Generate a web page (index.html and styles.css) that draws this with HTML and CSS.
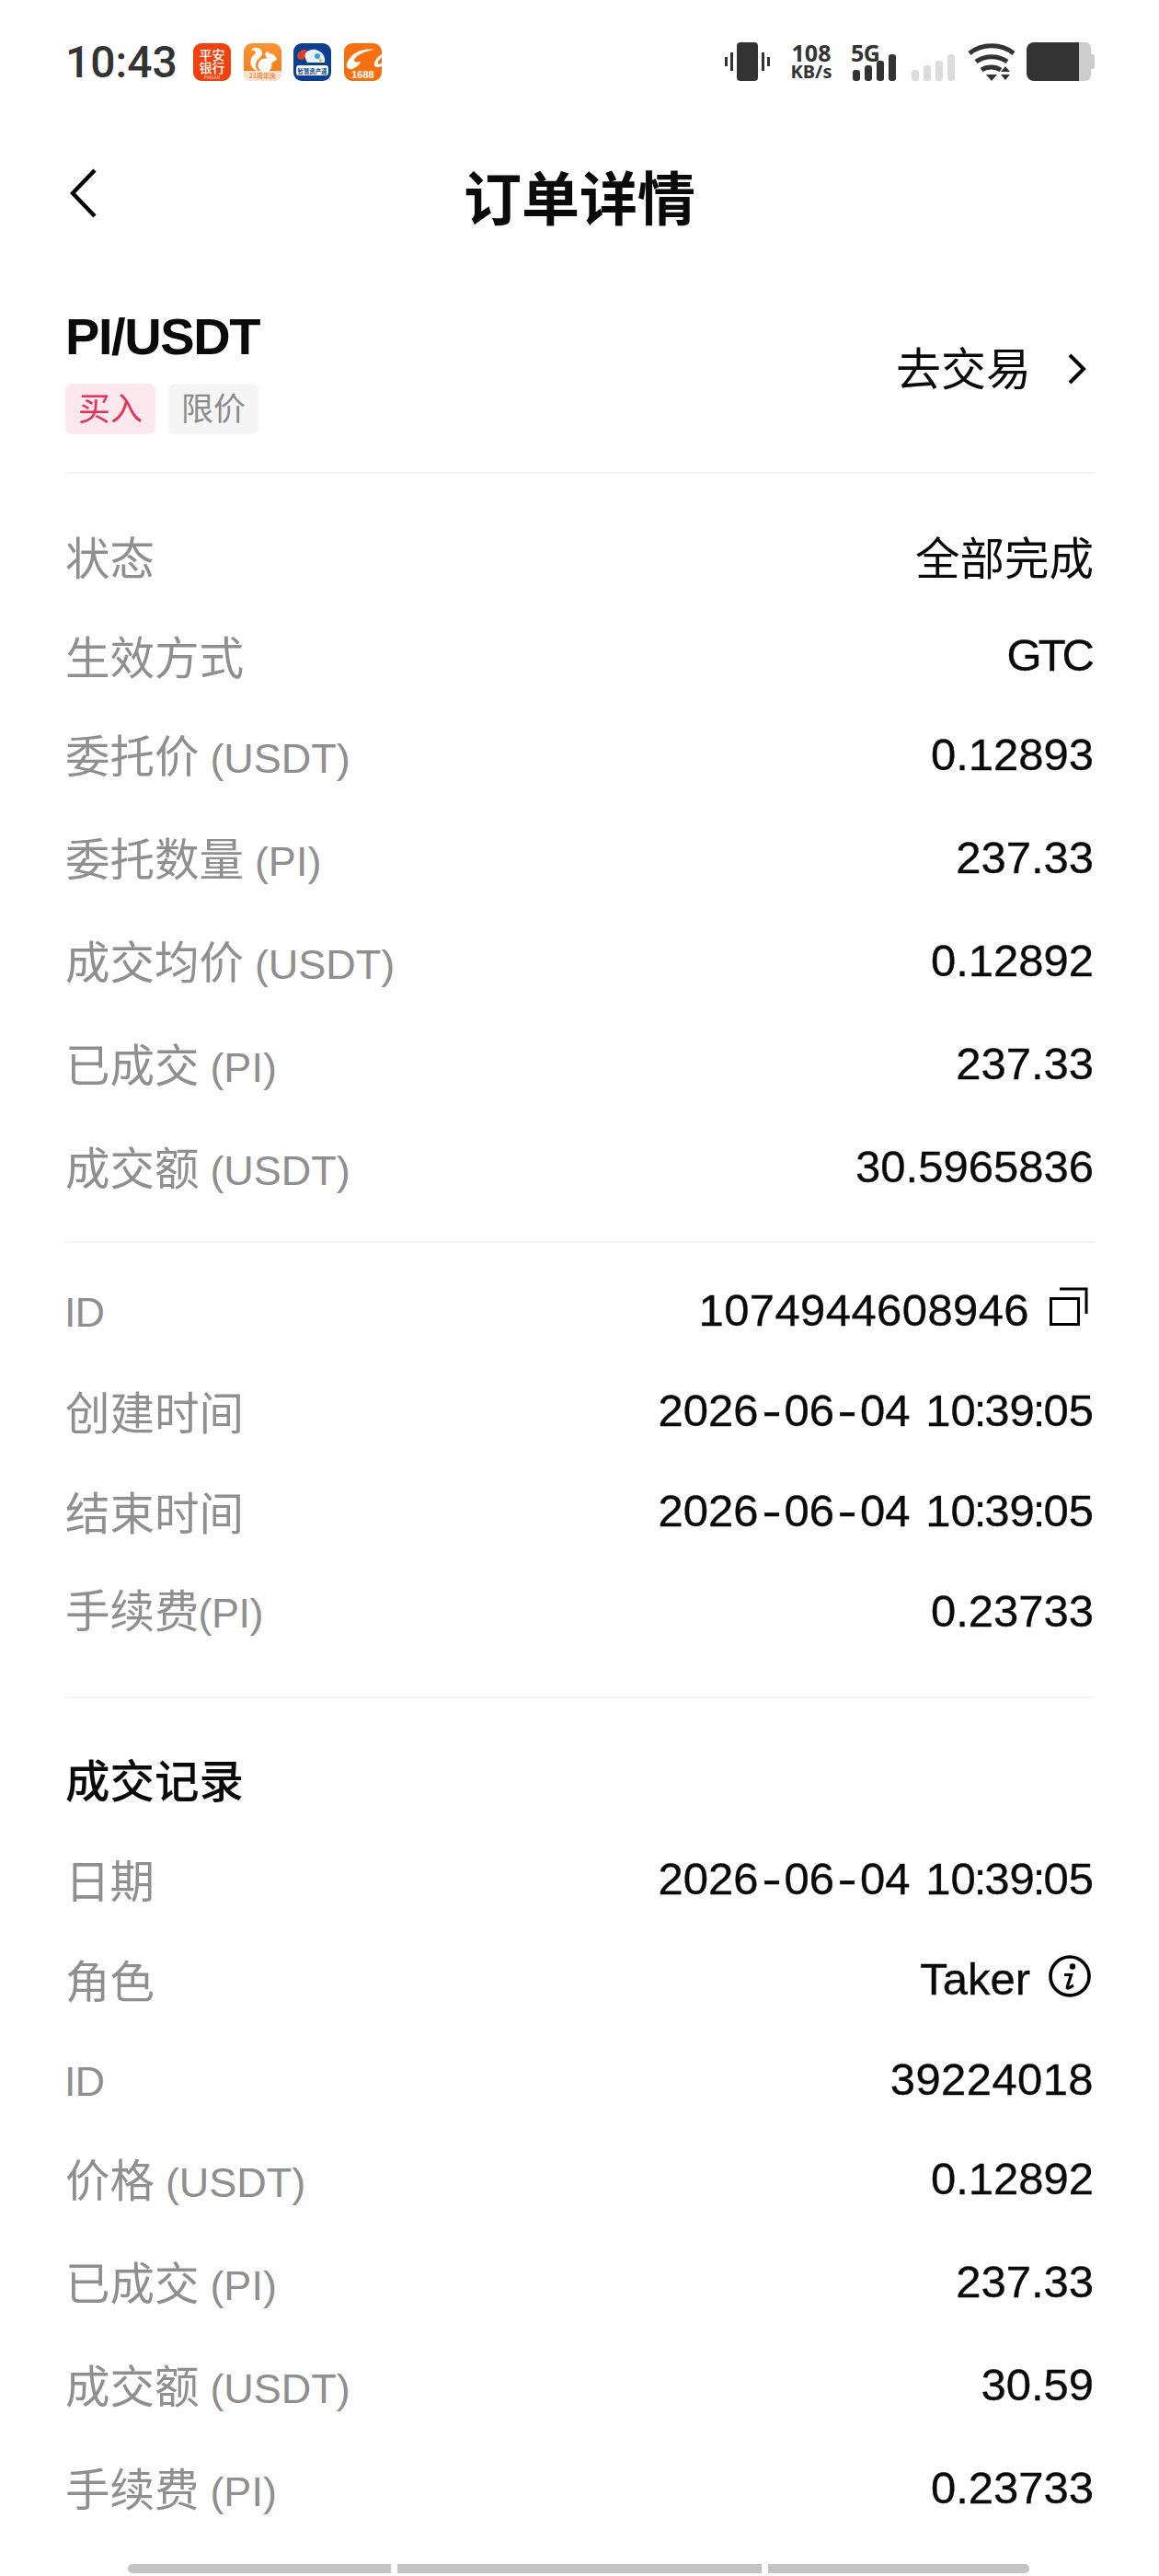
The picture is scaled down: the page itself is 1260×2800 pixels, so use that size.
FILE: index.html
```html
<!DOCTYPE html>
<html lang="zh-CN">
<head>
<meta charset="utf-8">
<title>订单详情</title>
<link rel="stylesheet" href="styles.css">
</head>
<body>
<div class="page">
  <header class="status">
    <div class="status-left">
      <span class="time">10:43</span>
      <div class="apps">
        <svg class="app" viewBox="0 0 41 41"><rect width="41" height="41" rx="9" fill="#f0410f"/><text x="20.5" y="18" class="logo-cn">平安</text><text x="20.5" y="32" class="logo-cn">银行</text><text x="20.5" y="38.5" class="logo-en">PINGAN</text></svg>
        <svg class="app" viewBox="0 0 41 41"><defs><linearGradient id="uc" x1="0" y1="0" x2="0" y2="1"><stop offset="0" stop-color="#fb9330"/><stop offset="1" stop-color="#f5761c"/></linearGradient></defs><rect width="41" height="41" rx="9" fill="url(#uc)"/><path d="M0 30h41v2a9 9 0 0 1-9 9H9a9 9 0 0 1-9-9z" fill="#fde3cf"/><path d="M8 7C12 3 19 5 20 10 21 14 16 16 14 20 12 24 13 27 16 30 9 29 6 23 8 17 9 13 13 12 13 10 13 8 10 8 8 7z" fill="#fff"/><circle cx="23" cy="24" r="7.5" fill="#fff"/><path d="M23 11l3-2 2 2c4 0 7 3 8 7l-4 2-2 2-4-2z" fill="#fff"/><text x="20.5" y="38" class="logo-uc">21周年庆</text></svg>
        <svg class="app" viewBox="0 0 41 41"><rect width="41" height="41" rx="9" fill="#0d3f8f"/><path d="M4 14c1-5 6-8 9-7l3 2-1 5-5 4-5-1z" fill="#d8402c"/><path d="M13 11c4-5 10-5 14-3 5 2 8 7 7 13H15c-2-4-3-7-2-10z" fill="#e6f3fb"/><circle cx="26" cy="14" r="3" fill="#3aa0dd"/><path d="M27 17l5 1-3 3z" fill="#f7b731"/><rect x="3" y="24" width="35" height="11" rx="3" fill="#fff"/><text x="20.5" y="33" class="logo-blue">智慧资产通</text></svg>
        <svg class="app" viewBox="0 0 41 41"><rect width="41" height="41" rx="9" fill="#f8700f"/><path d="M33 7C22 5 8 9 3 22 2 26 5 29 9 28 13 26 17 24 18 20 14 21 11 21 11 18 13 13 22 9 33 7z" fill="#fff"/><path d="M41 12C36 15 32 20 33 24 34 27 38 26 41 25V22C38 23 36 23 37 20 38 18 40 16 41 15z" fill="#fff"/><text x="20.5" y="38" class="logo-num">1688</text></svg>
      </div>
    </div>
    <div class="status-right">
      <svg class="ico-vib" viewBox="0 0 49 42"><rect x="13" y="0" width="23" height="42" rx="4" fill="#333"/><path d="M6 11h3v20H6zM0 16h3v10H0zM40 11h3v20h-3zM46 16h3v10h-3z" fill="#333"/></svg>
      <div class="speed"><span class="speed-num">108</span><span class="speed-unit">KB/s</span></div>
      <div class="net">
        <span class="five-g">5G</span>
        <svg class="ico-bars" viewBox="0 0 49 29"><rect x="2" y="17" width="8" height="12" rx="3" fill="#333"/><rect x="15" y="12" width="8" height="17" rx="3" fill="#333"/><rect x="28" y="7" width="8" height="22" rx="3" fill="#333"/><rect x="41" y="0" width="8" height="29" rx="3" fill="#333"/></svg>
      </div>
      <svg class="ico-bars2" viewBox="0 0 47 29"><rect x="0" y="17" width="8" height="12" rx="3" fill="#dcdcdc"/><rect x="13" y="12" width="8" height="17" rx="3" fill="#dcdcdc"/><rect x="26" y="7" width="8" height="22" rx="3" fill="#dcdcdc"/><rect x="39" y="0" width="8" height="29" rx="3" fill="#dcdcdc"/></svg>
      <svg class="ico-wifi" viewBox="0 0 52 42"><path d="M2 12C15 1 37 1 50 12M9 21c10-7 24-7 34 0M15 30c6-4 15-4 21 0" fill="none" stroke="#333" stroke-width="5"/><path d="M20 35h12l-6 7z" fill="#333"/><path d="M41 26l5 6H36zM36 35h10l-5 6z" fill="#333"/></svg>
      <svg class="ico-batt" viewBox="0 0 74 42"><path d="M57 0h7a6 6 0 0 1 6 6v7h2a2 2 0 0 1 2 2v12a2 2 0 0 1-2 2h-2v7a6 6 0 0 1-6 6h-7z" fill="#cccccc"/><path d="M8 0h49v42H8a8 8 0 0 1-8-8V8a8 8 0 0 1 8-8z" fill="#333"/></svg>
    </div>
  </header>

  <nav class="nav">
    <svg class="back" viewBox="0 0 30 54"><path d="M27 2L3 27l24 25" fill="none" stroke="#000" stroke-width="4.5"/></svg>
    <h1 class="title">订单详情</h1>
    <span></span>
  </nav>

  <section class="pair">
    <div class="pair-left">
      <div class="symbol">PI/USDT</div>
      <div class="tags"><span class="tag tag-buy">买入</span><span class="tag tag-limit">限价</span></div>
    </div>
    <div class="trade"><span>去交易</span><svg class="chev" viewBox="0 0 20 34"><path d="M2 2l15 15L2 32" fill="none" stroke="#000" stroke-width="4"/></svg></div>
  </section>

  <section class="block block-main">
    <div class="row row-xs"><span class="label">状态</span><span class="value-cn">全部完成</span></div>
    <div class="row row-s"><span class="label">生效方式</span><span class="value value-tight">GTC</span></div>
    <div class="row"><span class="label">委托价 <small>(USDT)</small></span><span class="value">0.12893</span></div>
    <div class="row"><span class="label">委托数量 <small>(PI)</small></span><span class="value">237.33</span></div>
    <div class="row"><span class="label">成交均价 <small>(USDT)</small></span><span class="value">0.12892</span></div>
    <div class="row"><span class="label">已成交 <small>(PI)</small></span><span class="value">237.33</span></div>
    <div class="row"><span class="label">成交额 <small>(USDT)</small></span><span class="value">30.5965836</span></div>
  </section>

  <section class="block block-id">
    <div class="row row-s"><span class="label label-id"><small>ID</small></span><span class="value value-icon"><span class="value-wide">1074944608946</span><svg class="copy" viewBox="0 0 42 42"><path d="M1.5 12.5h30v28h-30z" fill="none" stroke="#000" stroke-width="3"/><path d="M11 2h29v27" fill="none" stroke="#000" stroke-width="3"/></svg></span></div>
    <div class="row row-s"><span class="label">创建时间</span><span class="value value-date">2026<span class="dash">-</span>06<span class="dash">-</span>04 10<span class="colon">:</span>39<span class="colon">:</span>05</span></div>
    <div class="row row-s"><span class="label">结束时间</span><span class="value value-date">2026<span class="dash">-</span>06<span class="dash">-</span>04 10<span class="colon">:</span>39<span class="colon">:</span>05</span></div>
    <div class="row row-s"><span class="label label-joined">手续费<small>(PI)</small></span><span class="value">0.23733</span></div>
  </section>

  <section class="block block-deals">
    <h2 class="heading">成交记录</h2>
    <div class="row row-s"><span class="label">日期</span><span class="value value-date">2026<span class="dash">-</span>06<span class="dash">-</span>04 10<span class="colon">:</span>39<span class="colon">:</span>05</span></div>
    <div class="row row-s"><span class="label">角色</span><span class="value value-icon">Taker<svg class="info" viewBox="0 0 46 46"><circle cx="23" cy="23" r="21" fill="none" stroke="#000" stroke-width="3.6"/><circle cx="26" cy="12.5" r="3.2" fill="#000"/><path d="M17 21.500h7.500l-4.200 13c-.5 1.600 1 2 2.500 1L27 33" fill="none" stroke="#000" stroke-width="3.2"/></svg></span></div>
    <div class="row row-s"><span class="label label-id"><small>ID</small></span><span class="value value-wide">39224018</span></div>
    <div class="row"><span class="label">价格 <small>(USDT)</small></span><span class="value">0.12892</span></div>
    <div class="row"><span class="label">已成交 <small>(PI)</small></span><span class="value">237.33</span></div>
    <div class="row"><span class="label">成交额 <small>(USDT)</small></span><span class="value">30.59</span></div>
    <div class="row"><span class="label">手续费 <small>(PI)</small></span><span class="value">0.23733</span></div>
  </section>

  <div class="gesture"><span class="seg seg-a"></span><span class="seg seg-b"></span><span class="seg seg-c"></span></div>
</div>
</body>
</html>
```

FILE: styles.css
```css
* { box-sizing: border-box; }
html, body { margin: 0; padding: 0; background: #fff; }
body { font-family: "Liberation Sans", "Noto Sans CJK SC", sans-serif; color: #0a0a0a; }
.page { width: 1260px; height: 2800px; padding: 0 71px 3px; overflow: hidden; display: flex; flex-direction: column; }

.status { height: 134px; flex: none; padding-top: 46px; display: flex; justify-content: space-between; align-items: flex-start; }
.status-left { display: flex; align-items: center; height: 42px; }
.time { font-family: Roboto, "Liberation Sans", sans-serif; font-size: 48px; font-weight: 500; color: #333; width: 139px; }
.apps { display: flex; gap: 13.5px; }
.app { width: 41px; height: 41px; display: block; }
.logo-cn { font: 500 14px "Noto Sans CJK SC", sans-serif; fill: #fff; text-anchor: middle; }
.logo-en { font: 400 4.5px "Liberation Sans", sans-serif; fill: #ffd9c6; text-anchor: middle; }
.logo-uc { font: 700 7px "Noto Sans CJK SC", sans-serif; fill: #f08a4a; text-anchor: middle; }
.logo-blue { font: 700 6.4px "Noto Sans CJK SC", sans-serif; fill: #0d3f8f; text-anchor: middle; }
.logo-num { font: 700 11px "Liberation Sans", sans-serif; fill: #fff; text-anchor: middle; }

.status-right { display: flex; align-items: flex-start; margin-right: -1px; height: 42px; }
.ico-vib { width: 49px; height: 42px; margin-right: 19px; }
.speed { width: 52px; margin-right: 17px; display: flex; flex-direction: column; align-items: center; color: #333; font-family: "Noto Sans", sans-serif; font-weight: 700; }
.speed-num { font-size: 25px; line-height: 22px; }
.speed-unit { font-size: 20px; line-height: 20px; }
.net { width: 51px; margin-right: 15px; height: 42px; display: flex; flex-direction: column; align-items: flex-start; }
.five-g { font: 700 25px/13px "Noto Sans", sans-serif; color: #333; height: 13px; letter-spacing: -0.5px; margin-top: 5px; }
.ico-bars { width: 49px; height: 29px; margin-top: -5px; }
.ico-bars2 { width: 47px; height: 29px; margin: 13px 14px 0 0; }
.ico-wifi { width: 52px; height: 42px; margin-right: 12px; }
.ico-batt { width: 74px; height: 42px; }

.nav { height: 160px; flex: none; display: grid; grid-template-columns: 1fr auto 1fr; align-items: center; }
.back { width: 30px; height: 54px; margin: 0 0 8px 5px; }
.title { margin: 0 0 4px; font: 700 63px/80px "Noto Sans CJK SC", sans-serif; color: #0a0a0a; }

.pair { height: 221px; flex: none; padding-top: 41px; border-bottom: 2px solid #f4f4f4; display: flex; justify-content: space-between; align-items: flex-start; }
.symbol { font-size: 56px; line-height: 62px; font-weight: 700; letter-spacing: -1.4px; }
.tags { display: flex; gap: 14px; margin-top: 20px; }
.tag { width: 98px; height: 55px; border-radius: 8px; font: 400 35px/50px "Noto Sans CJK SC", sans-serif; text-align: center; }
.tag-buy { background: #fde8ee; color: #e0345f; }
.tag-limit { background: #f5f5f5; color: #8b8b8b; }
.trade { display: flex; align-items: center; margin-top: 31px; font: 400 49px/64px "Noto Sans CJK SC", sans-serif; margin-right: 6px; }
.chev { width: 20px; height: 34px; margin: 5px 2px 0 40px; }

.block { flex: none; }
.block-main { padding-top: 35px; }
.block-id { margin-top: 23px; padding-top: 18px; border-top: 2px solid #f4f4f4; }
.block-deals { margin-top: 39px; padding-top: 43px; border-top: 2px solid #f4f4f4; }

.row { height: 112px; display: flex; justify-content: space-between; align-items: center; }
.row-s { height: 109px; }
.row-xs { height: 107px; }
.label { font: 400 48.5px/64px "Noto Sans CJK SC", sans-serif; color: #8f8f8f; white-space: nowrap; }
.label small { font-family: "Liberation Sans", sans-serif; font-size: 45px; color: #8f8f8f; margin-left: 1px; }
.label-id small { margin-left: -1px; letter-spacing: -1px; }
.label-joined small { margin-left: -1px; letter-spacing: -0.5px; }
.value { font-family: "Liberation Sans", "Noto Sans CJK SC", sans-serif; font-size: 49px; line-height: 64px; color: #0a0a0a; white-space: nowrap; -webkit-text-stroke: 0.35px #0a0a0a; margin-bottom: 5px; }
.row-s .value { margin-bottom: 0; }
.value-cn { font: 400 48.5px/64px "Noto Sans CJK SC", sans-serif; color: #0a0a0a; white-space: nowrap; }
.value-tight { letter-spacing: -4px; padding-right: 3px; }
.value-wide { letter-spacing: 0.4px; }
.value-icon { display: flex; align-items: center; }
.value-date { word-spacing: 3px; }
.dash { display: inline-block; width: 28px; text-align: center; transform: scaleX(1.3); }
.colon { margin: 0 -2px; }
.copy { width: 42px; height: 42px; margin: 0 6px 8px 22px; }
.info { width: 46px; height: 46px; margin: 0 3px 6px 20px; }
.heading { margin: 0; height: 98px; font: 500 48.5px/88px "Noto Sans CJK SC", sans-serif; color: #0a0a0a; }

.gesture { margin: auto 0 0 68px; display: flex; gap: 7px; height: 10px; flex: none; }
.seg { display: block; height: 10px; background: #c4c4c4; }
.seg-a { width: 286px; border-radius: 5px 0 0 5px; }
.seg-b { width: 396px; }
.seg-c { width: 284px; border-radius: 0 5px 5px 0; }
```
